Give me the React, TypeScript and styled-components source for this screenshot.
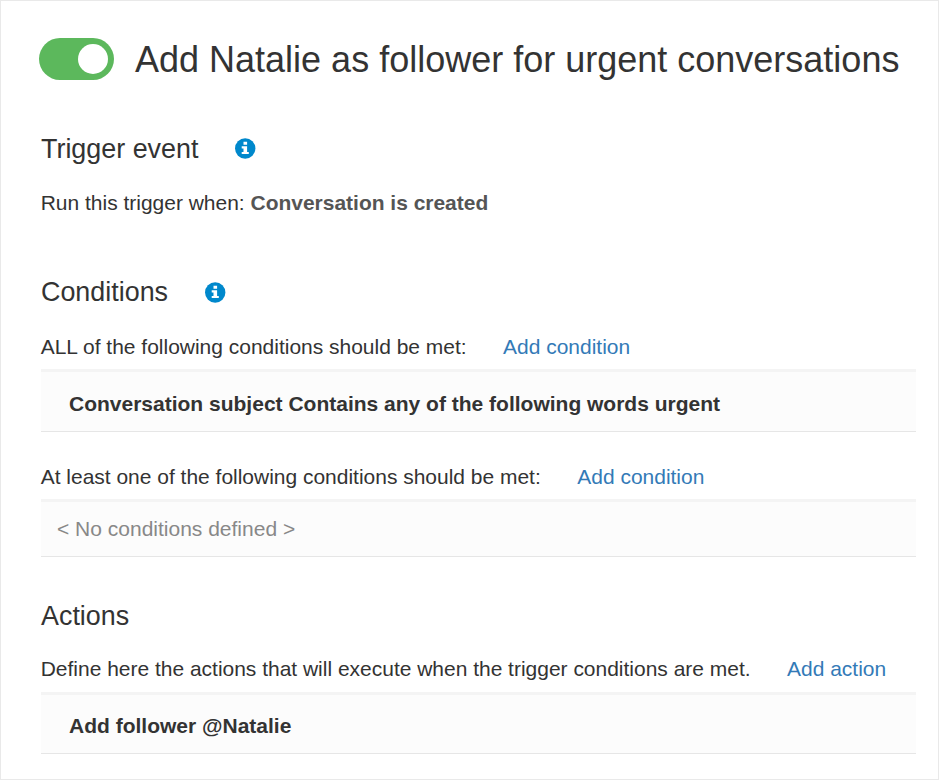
import React from 'react';
import styled, { createGlobalStyle } from 'styled-components';

const Global = createGlobalStyle`
  * { box-sizing: border-box; }
  body { margin: 0; background: #fff; }
`;
const Page = styled.main`
  width: 939px; height: 780px; border: 1px solid #e9e9e9; overflow: hidden;
  padding: 0 22px 0 40px; font-family: "Liberation Sans", Arial, sans-serif;
  font-size: 21px; color: #333; white-space: nowrap;
`;
const Header = styled.header`
  display: flex; align-items: center; height: 116px; gap: 21px; margin-left: -2px;
`;
const Toggle = styled.button`
  width: 75px; height: 42px; border: 0; border-radius: 21px; background: #5cb85c;
  display: flex; align-items: center; justify-content: flex-end; padding: 0 6px;
`;
const Knob = styled.span`
  width: 30px; height: 30px; border-radius: 50%; background: #fff;
`;
const Title = styled.h1`
  margin: 0; padding-top: 2px; font-size: 36px; line-height: 42px; font-weight: 400;
`;
const Heading = styled.h2<{ $top: number }>`
  margin: ${p => p.$top}px 0 0; height: 32px; display: flex; align-items: center; gap: 36.5px;
  font-size: 26.9px; font-weight: 400;
`;
const HeadingText = styled.span<{ $drop?: number }>`
  padding-top: ${p => p.$drop ?? 0}px;
`;
const Line = styled.div<{ $top: number }>`
  margin-top: ${p => p.$top}px; height: 24px; line-height: 24px; display: flex; gap: 36.5px;
  font-size: 20.98px; margin-left: -0.3px;
`;
const Link = styled.a`color: #337ab7; text-decoration: none;`;
const Value = styled.strong`color: #555;`;
const Panel = styled.div<{ $height: number; $gap?: number; $empty?: boolean }>`
  margin-top: ${p => p.$gap ?? 10}px; height: ${p => p.$height}px; background: #fcfcfc;
  border-top: 3px solid #f4f4f4; border-bottom: 1px solid #e6e6e6;
  display: flex; align-items: center;
  padding: ${p => (p.$empty ? '0 0 0 16px' : '4px 0 0 28px')};
  font-weight: ${p => (p.$empty ? 400 : 700)};
  color: ${p => (p.$empty ? '#888' : '#333')};
`;
const Icon = styled.svg`width: 21px; height: 21px; display: block;`;

const Info = () => (
  <Icon viewBox="0 0 21 21" aria-label="Info">
    <circle cx="10.2" cy="10.5" r="10.2" fill="#0088cc" />
    <path fill="#fff" d="M8.5 3.8h3.6v3H8.5zM6.7 8.2h5.4v5.7h1.7v2.2H6.7v-2.2h1.8v-3.5H6.7z" />
  </Icon>
);

export default function App() {
  return (
    <Page>
      <Global />
      <Header>
        <Toggle aria-label="Enabled"><Knob /></Toggle>
        <Title>Add Natalie as follower for urgent conversations</Title>
      </Header>
      <Heading $top={15}><HeadingText $drop={2}>Trigger event</HeadingText><Info /></Heading>
      <Line $top={27}><span>Run this trigger when: <Value>Conversation is created</Value></span></Line>
      <Heading $top={61}><HeadingText>Conditions</HeadingText><Info /></Heading>
      <Line $top={27}><span>ALL of the following conditions should be met:</span><Link>Add condition</Link></Line>
      <Panel $height={63}>Conversation subject Contains any of the following words urgent</Panel>
      <Line $top={33}><span>At least one of the following conditions should be met:</span><Link>Add condition</Link></Line>
      <Panel $height={58} $empty>&lt; No conditions defined &gt;</Panel>
      <Heading $top={43}><HeadingText>Actions</HeadingText></Heading>
      <Line $top={25}><span>Define here the actions that will execute when the trigger conditions are met.</span><Link>Add action</Link></Line>
      <Panel $height={62} $gap={11}>Add follower @Natalie</Panel>
    </Page>
  );
}
